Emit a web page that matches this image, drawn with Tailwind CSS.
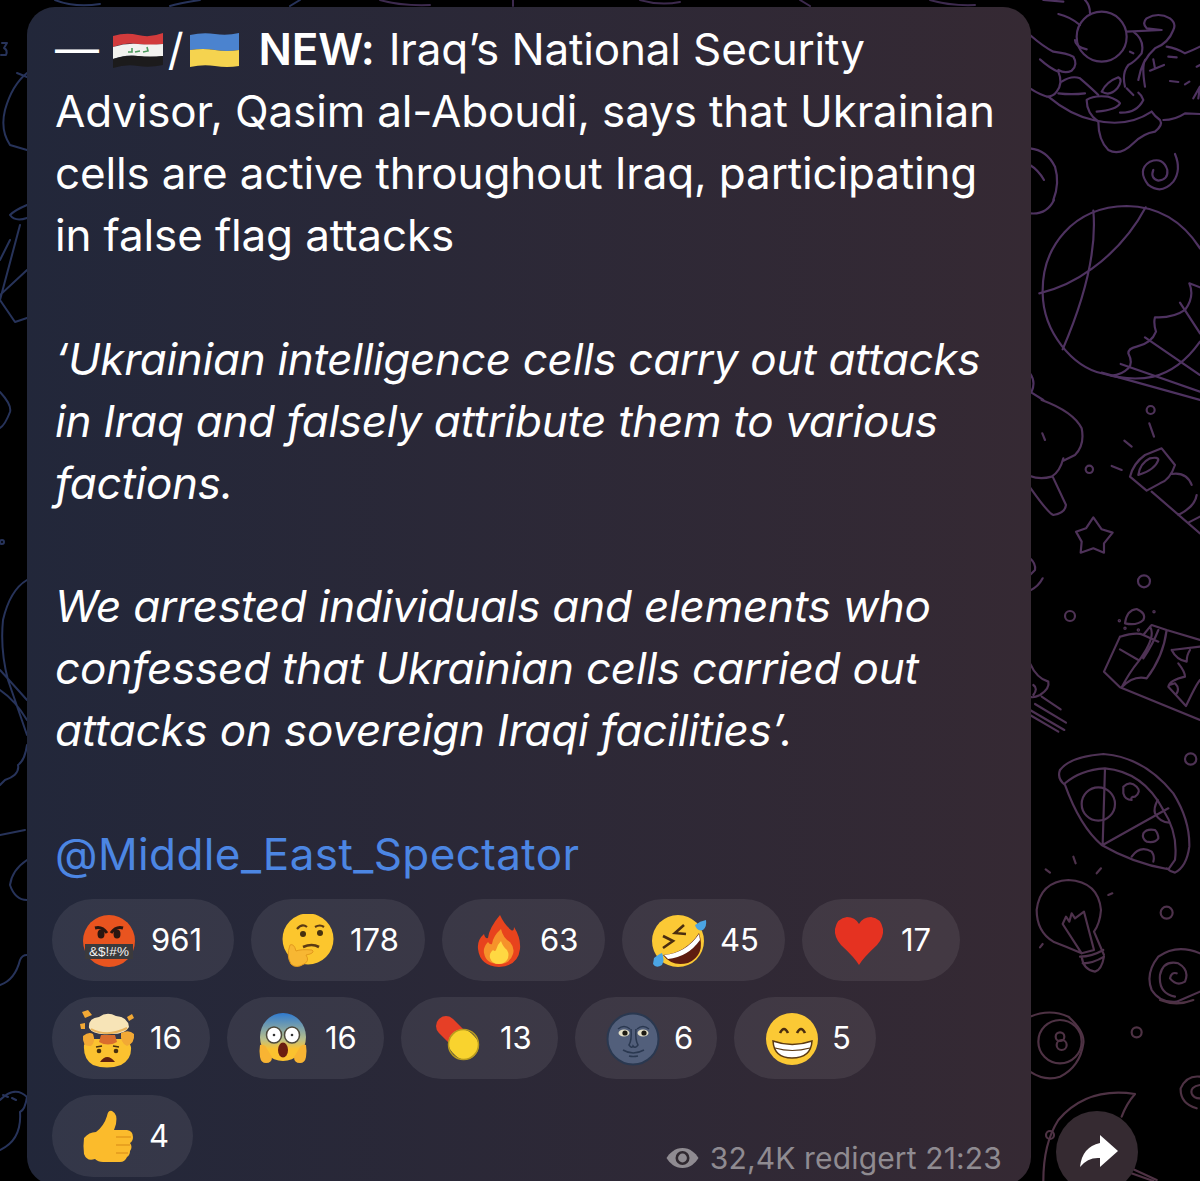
<!DOCTYPE html>
<html lang="en">
<head>
<meta charset="utf-8">
<script src="https://cdn.jsdelivr.net/npm/@tailwindcss/browser@4"></script>
<title>Post</title>
</head>
<body class="bg-black">
<div class="relative w-[1200px] h-[1181px] overflow-hidden bg-black pt-[7px] pl-[27px] font-['Inter','Liberation_Sans',sans-serif]">

  <!-- wallpaper doodles -->
  <svg class="absolute left-0 top-0" width="1200" height="1181" viewBox="0 0 1200 1181" fill="none" stroke-linecap="round" stroke-linejoin="round">
    <g stroke="#27335a" stroke-width="2">
      <path d="M2 43L7 43L4 48Q8 50 6 55L1 55"/>
      <path d="M27 73Q12 85 5 110Q0 130 10 145L27 150M17 73L27 77"/>
      <path d="M27 205Q15 210 10 215Q15 222 27 218M0 300L20 225M0 295L27 270M0 300L15 322L27 318M0 260L10 240"/>
      <path d="M0 392Q12 405 10 412Q5 425 0 428"/>
      <circle cx="2" cy="542" r="2"/>
      <path d="M27 580Q10 590 3 620Q0 650 8 680L27 735M0 670L27 700M0 690Q15 700 27 720"/>
      <path d="M27 745Q25 760 18 765Q20 775 5 780L0 785M0 835L25 830"/>
      <path d="M27 860Q12 870 10 885Q15 900 27 900"/>
      <path d="M0 985Q15 980 20 960Q22 955 27 955"/>
      <path d="M0 1100Q15 1085 27 1097Q25 1110 20 1112Q22 1140 0 1150M3 1095L8 1097M12 1098L16 1100"/>
      <path d="M55 0Q75 8 100 4M170 6Q180 3 200 0M300 0L290 6"/>
    </g>
    <g stroke="#3d2a4e" stroke-width="2">
      <path d="M380 0Q400 6 430 5M513 0L513 6M640 0Q660 6 680 2M800 0L810 6M930 0Q950 6 975 5"/>
    </g>
    <g transform="translate(1030 0) scale(.3333)" stroke="#4e3260" stroke-width="6.500">
      <circle cx="215" cy="110" r="75"/>
      <path d="M85 42Q120 50 150 75M165 0Q180 15 180 40M40 0L100 5M135 120Q135 140 170 148"/>
      <path d="M0 105Q40 140 70 155Q110 160 130 170Q145 195 125 212Q105 222 85 210M30 178Q60 205 85 215Q100 250 80 275Q70 290 50 290M0 265Q30 285 60 292M55 290Q120 345 190 360Q290 385 365 335"/>
      <path d="M85 280Q125 285 165 280M95 245Q125 225 150 235Q185 265 205 285"/>
      <path d="M215 275Q230 245 265 232Q280 240 262 265Q240 290 215 275M170 300Q190 285 235 290Q265 300 270 310Q260 330 200 335M170 300Q170 340 205 365"/>
      <path d="M270 338Q320 340 340 300Q335 285 325 278M290 265L310 285"/>
      <path d="M205 365Q205 420 235 450Q270 470 310 430Q340 400 375 395Q400 375 390 360Q375 350 365 335"/>
      <path d="M400 360Q435 360 465 340L510 342M325 240Q335 180 375 145Q415 130 430 90Q440 70 420 55Q385 35 350 55Q335 70 350 85L395 90M290 95L395 90M310 95Q345 120 335 160Q315 185 295 195Q275 220 285 260M300 155L310 160M410 140Q440 145 465 160Q490 150 510 140M345 260Q335 200 345 180"/>
      <path d="M415 170L440 172M420 243L445 246M465 253L478 245M370 178L375 205M360 212L402 195M490 295L510 260L505 295M500 200L510 195"/>
      <path d="M435 462Q455 510 430 545Q395 585 355 555Q320 510 360 485Q400 470 412 510Q415 540 385 542Q360 535 370 510"/>
      <path d="M0 445Q50 450 75 500Q90 550 70 600M0 495Q25 510 42 540"/>
    </g>
    <g transform="translate(1030 200) scale(.3333)" stroke="#4e3260" stroke-width="6.500">
      <path d="M0 40Q50 45 72 0"/>
      <path d="M510 145Q430 20 290 18C130 20 35 140 38 280C40 400 130 500 215 520Q300 545 370 530Q450 510 510 425"/>
      <path d="M190 32Q205 200 98 448M347 22Q290 130 185 207Q110 262 28 280"/>
      <path d="M510 262L478 250Q495 290 465 330Q430 355 375 352Q370 370 378 395Q365 430 320 440Q295 445 295 460Q310 490 295 505Q275 525 245 527"/>
      <path d="M450 308L510 400M345 412L510 525M272 492L510 575M215 518L510 600M0 520Q18 545 5 575L0 580M0 575L40 600"/>
    </g>
    <g transform="translate(1030 400) scale(.3333)" stroke="#4e3259" stroke-width="6.500">
      <path d="M35 0Q130 35 155 85Q165 135 135 165L100 182M100 175Q90 215 65 230Q30 240 0 228M37 100L45 120M68 230L108 315Q105 340 70 345Q55 340 0 262"/>
      <circle cx="178" cy="208" r="11"/>
      <path d="M245 198L275 210M283 122L305 140M358 70L372 110"/>
      <circle cx="362" cy="30" r="12"/>
      <path d="M300 230Q310 190 345 165L395 145L435 195Q420 240 390 250L350 272ZM325 225Q330 190 360 175Q385 170 385 180Q375 210 325 225M365 275L510 400M425 222Q470 215 485 255M500 285Q495 320 445 345M510 350L475 368"/>
      <path d="M190 352L215 388L248 398L222 430L222 458L190 445L152 458L155 425L138 395L168 385Z"/>
      <circle cx="342" cy="544" r="18"/>
      <path d="M0 475Q18 490 15 510L0 525M38 535Q25 560 0 572"/>
    </g>
    <g transform="translate(1030 600) scale(.3333)" stroke="#4e3254" stroke-width="6.500">
      <circle cx="120" cy="48" r="15"/>
      <path d="M285 70Q290 30 320 27Q350 40 340 60Q320 78 285 70"/>
      <circle cx="268" cy="62" r="2"/><circle cx="285" cy="85" r="2"/><circle cx="372" cy="35" r="2"/><circle cx="325" cy="90" r="2"/>
      <path d="M270 110L222 215L270 262M270 110Q320 95 340 105Q360 80 365 75L410 90L510 120M270 148L325 180M340 105L385 125M360 80Q380 110 325 185Q300 215 275 262Q310 225 350 235Q400 170 410 90M270 262L510 360M385 90Q370 130 340 175"/>
      <path d="M425 150L510 140M425 150Q440 180 470 185Q470 165 480 150M445 190Q465 215 465 230Q420 240 415 260L468 318Q500 250 510 240M418 255L435 250Q450 265 440 280"/>
      <path d="M0 190Q20 235 55 245Q60 265 30 285Q10 295 0 290M10 255Q25 265 10 285M35 290L92 328M15 312L108 368M0 330L103 390M85 395L0 345"/>
      <circle cx="482" cy="477" r="17"/>
      <path d="M90 510Q120 470 220 462Q340 470 430 580Q480 660 478 740Q470 800 435 818Q420 815 410 805M105 550Q150 510 225 505Q340 515 400 630Q445 700 435 780L415 808M90 510Q80 535 105 555M105 555Q150 680 215 735M215 735Q310 790 415 808M225 505L218 735M218 735L415 625"/>
      <circle cx="205" cy="612" r="50"/>
      <path d="M280 560Q300 540 320 560Q335 575 315 590Q300 590 305 600Q285 600 280 580ZM340 700Q350 685 375 690Q385 700 385 715Q375 730 350 725Q335 715 340 700M305 770Q330 735 365 755Q375 770 370 785M383 600Q370 625 375 640Q390 668 418 668"/>
    </g>
    <g transform="translate(1030 800) scale(.3333)" stroke="#4e324c" stroke-width="6.500">
      <path d="M155 460Q110 440 70 425Q20 395 20 330Q30 245 115 240Q205 245 213 330Q210 370 192 395Q205 425 222 465M98 372L108 350L118 365L125 340L135 355L162 335L192 450L155 460ZM150 470Q185 470 220 450M158 490Q190 490 222 470M155 470Q160 510 195 515Q215 510 222 470"/>
      <path d="M47 208L60 218M130 170L137 190M213 205L200 220M235 285L247 280M38 432L30 442"/>
      <circle cx="410" cy="338" r="18"/>
      <path d="M510 460Q440 430 385 470Q345 520 365 570Q390 610 440 605L510 575M435 590Q385 580 390 525Q400 480 445 490Q480 510 465 545Q440 560 420 535Q425 515 440 520"/>
    </g>
    <g transform="translate(1030 1000) scale(.3333)" stroke="#4e3244" stroke-width="6.500">
      <path d="M0 50Q60 25 115 50Q165 95 160 130Q150 200 90 230Q45 245 0 215M390 0Q440 20 490 0"/>
      <circle cx="90" cy="125" r="65"/><circle cx="90" cy="110" r="13"/><circle cx="95" cy="135" r="15"/>
      <circle cx="320" cy="97" r="15"/>
      <path d="M510 230Q470 225 452 265Q450 310 500 325M510 255Q480 260 485 280Q490 295 510 295"/>
      <path d="M315 282Q170 260 85 360Q40 430 40 543M315 282Q290 310 275 350M300 518L370 543M310 508L380 540"/>
      <circle cx="60" cy="405" r="12"/>
    </g>
  </svg>

  <!-- message bubble -->
  <div class="relative w-[1004px] h-[1178px] rounded-[28px] bg-linear-to-r from-[#22273a] to-[#352933] pt-[12px]">
    <div class="pl-[28px] text-white text-[44px] leading-[61.93px] tracking-[-0.15px] whitespace-nowrap">
      <div class="flex items-center h-[61.93px]">
        <span>—</span>
        <svg class="ml-[13px]" width="52" height="36" viewBox="0 0 52 36">
          <path d="M1 4Q14 0 26 3T51 1V12Q38 14 26 12T1 15Z" fill="#d23b3c"/>
          <path d="M1 15Q14 11 26 12T51 12V24Q38 26 26 24T1 27Z" fill="#f2f2ef"/>
          <path d="M1 27Q14 23 26 24T51 24V33Q38 36 26 34T1 36Z" fill="#1c1b1c"/>
          <path d="M16 20L20 20L20 16M23 20L28 19M31 20L36 19L35 15" stroke="#4d9a5e" stroke-width="1.6" fill="none"/>
        </svg>
        <span class="ml-[4px]">/</span>
        <svg class="ml-[5px]" width="51" height="36" viewBox="0 0 51 36">
          <path d="M1 3Q14 0 26 2T50 1V18Q38 20 26 18T1 18Z" fill="#4b83cf"/>
          <path d="M1 18Q14 16 26 18T50 18V34Q38 36 26 34T1 35Z" fill="#f5d34f"/>
        </svg>
        <span class="ml-[19px] font-semibold">NEW:</span><span class="ml-[14px]">Iraq’s National Security</span>
      </div>
      <div>Advisor, Qasim al-Aboudi, says that Ukrainian</div>
      <div>cells are active throughout Iraq, participating</div>
      <div>in false flag attacks</div>
      <div class="h-[61.93px]"></div>
      <div class="italic tracking-[-0.3px]">‘Ukrainian intelligence cells carry out attacks</div>
      <div class="italic tracking-[-0.3px]">in Iraq and falsely attribute them to various</div>
      <div class="italic tracking-[-0.3px]">factions.</div>
      <div class="h-[61.93px]"></div>
      <div class="italic tracking-[-0.2px]">We arrested individuals and elements who</div>
      <div class="italic tracking-[-0.2px]">confessed that Ukrainian cells carried out</div>
      <div class="italic tracking-[-0.2px]">attacks on sovereign Iraqi facilities’.</div>
      <div class="h-[61.93px]"></div>
      <div class="text-[#4c86e3] tracking-[0.4px]">@Middle_East_Spectator</div>
    </div>

    <div class="mt-[13px] pl-[25px] flex flex-col gap-[16px] text-white text-[31px]">
      <div class="flex gap-[17px]">
        <div class="w-[182px] h-[82px] rounded-full bg-white/[0.08] flex items-center pt-[1px] pl-[30px] gap-[15px]">
          <svg width="54" height="54" viewBox="0 0 54 54">
            <circle cx="27" cy="27" r="26" fill="#e9541f"/>
            <path d="M13 14Q20 12 25 19M41 14Q34 12 29 19" stroke="#2a1610" stroke-width="3" fill="none"/>
            <ellipse cx="19" cy="20" rx="3.5" ry="4.5" fill="#2a1610"/><ellipse cx="35" cy="20" rx="3.5" ry="4.5" fill="#2a1610"/>
            <rect x="3" y="30" width="48" height="15" fill="#3b3a3c"/>
            <text x="27" y="42" text-anchor="middle" fill="#f3f3f3" font-size="13.5" font-family="Liberation Sans">&amp;$!#%</text>
          </svg>
          <span>961</span>
        </div>
        <div class="w-[174px] h-[82px] rounded-full bg-white/[0.08] flex items-center pt-[1px] pl-[31px] gap-[15px]">
          <svg width="53" height="54" viewBox="0 0 53 54">
            <circle cx="26" cy="25" r="25.5" fill="#fcc62d"/>
            <path d="M15 15Q20 9 25 13M33 13Q38 10 42 13" stroke="#5b3a14" stroke-width="2.2" fill="none"/>
            <circle cx="21" cy="20" r="3" fill="#46300f"/><circle cx="38" cy="19" r="3" fill="#46300f"/>
            <path d="M21 33Q30 29 37 33" stroke="#5b3a14" stroke-width="2.6" fill="none"/>
            <path d="M8 31Q12 29 14 37Q19 35 30 36Q33 38 28 40L24 41Q28 47 22 50Q14 55 9 50Q4 42 8 31Z" fill="#f7b733" stroke="#e39a1d" stroke-width="1"/>
          </svg>
          <span>178</span>
        </div>
        <div class="w-[163px] h-[82px] rounded-full bg-white/[0.08] flex items-center pt-[1px] pl-[35px] gap-[19px]">
          <svg width="44" height="54" viewBox="0 0 44 54">
            <path d="M23 1Q27 10 34 16Q37 18 37 13Q44 24 43 35Q41 52 22 53Q3 52 1 35Q0 26 7 20Q8 25 11 24Q12 14 23 1Z" fill="#e8431d"/>
            <path d="M24 15Q26 24 33 28Q38 34 36 40Q33 50 22 50Q9 50 7 39Q6 33 11 28Q13 31 15 30Q16 22 24 15Z" fill="#f6922a"/>
            <path d="M24 27Q26 33 30 36Q33 41 30 46Q27 50 22 50Q15 50 13 44Q12 39 16 36Q18 38 19 36Q20 31 24 27Z" fill="#ffd842"/>
          </svg>
          <span>63</span>
        </div>
        <div class="w-[163px] h-[82px] rounded-full bg-white/[0.08] flex items-center pt-[1px] pl-[28px] gap-[13px]">
          <svg width="57" height="56" viewBox="0 0 57 56">
            <circle cx="28" cy="28" r="26" fill="#fbc935"/>
            <path d="M34 12L25 20L36 21M13 23L23 28L13 35" stroke="#4a2d10" stroke-width="2.6" fill="none"/>
            <path d="M13 42Q36 40 49 20Q56 42 38 50Q22 54 13 42Z" fill="#5e1c10"/>
            <path d="M14 42Q36 40 49 21L50 27Q38 44 18 46Z" fill="#ffffff"/>
            <path d="M45 12Q50 8 56 7Q57 14 53 17Q47 19 45 12Z" fill="#4ba5e4"/>
            <path d="M4 45Q9 41 12 40Q15 47 12 52Q6 56 3 51Z" fill="#4ba5e4"/>
          </svg>
          <span>45</span>
        </div>
        <div class="w-[158px] h-[82px] rounded-full bg-white/[0.08] flex items-center pt-[1px] pl-[32px] gap-[17px]">
          <svg width="50" height="50" viewBox="0 0 50 50">
            <path d="M25 49Q21 42 7 29Q0 21 1 13Q3 2 13 1Q21 1 25 8Q29 1 37 1Q47 2 49 13Q50 21 43 29Q29 42 25 49Z" fill="#e53221"/>
          </svg>
          <span>17</span>
        </div>
      </div>

      <div class="flex gap-[17px]">
        <div class="w-[158px] h-[82px] rounded-full bg-white/[0.08] flex items-center pt-[1px] pl-[27px] gap-[14px]">
          <svg width="57" height="59" viewBox="0 0 57 59">
            <path d="M5 36Q8 30 14 30H44Q50 31 52 38Q53 50 42 56Q28 61 14 56Q4 50 5 36Z" fill="#fbc22f"/>
            <path d="M4 27Q10 22 14 25Q17 33 12 37Q3 38 4 27ZM42 24Q50 20 55 25Q56 34 48 37Q41 34 42 24Z" fill="#f2a935"/>
            <path d="M22 26H36L38 33Q29 38 20 33Z" fill="#d96d2d"/>
            <path d="M10 19Q9 9 20 8Q28 2 37 7Q49 8 50 18Q46 26 29 25Q14 26 10 19Z" fill="#f7e4b7"/>
            <path d="M12 20Q28 29 48 19" stroke="#e8b35d" stroke-width="2" fill="none"/>
            <path d="M3 3L9 1L13 6L6 9ZM48 8L53 5L55 9L50 12ZM1 15L6 14L6 20L2 20Z" fill="#f2a935"/>
            <circle cx="20" cy="42" r="2.3" fill="#46300f"/><circle cx="37" cy="42" r="2.3" fill="#46300f"/>
            <path d="M17 38L23 37M34 37L40 38" stroke="#46300f" stroke-width="1.7"/>
            <path d="M21 53Q28 43 36 53Z" fill="#5e1f10"/>
          </svg>
          <span>16</span>
        </div>
        <div class="w-[157px] h-[82px] rounded-full bg-white/[0.08] flex items-center pt-[1px] pl-[32px] gap-[18px]">
          <svg width="48" height="51" viewBox="0 0 48 51">
            <defs><linearGradient id="sc" x1="0" y1="0" x2="0" y2="1"><stop offset="0" stop-color="#2f7ad0"/><stop offset=".55" stop-color="#b9c08b"/><stop offset=".75" stop-color="#fbc22f"/></linearGradient></defs>
            <ellipse cx="24" cy="24" rx="23" ry="24" fill="url(#sc)"/>
            <ellipse cx="15" cy="22" rx="7.5" ry="8" fill="#fff" stroke="#4e4a3c" stroke-width="1.5"/>
            <ellipse cx="33" cy="22" rx="7.5" ry="8" fill="#fff" stroke="#4e4a3c" stroke-width="1.5"/>
            <circle cx="15" cy="22" r="1.3" fill="#333"/><circle cx="33" cy="22" r="1.3" fill="#333"/>
            <ellipse cx="24" cy="37" rx="5" ry="7.5" fill="#6a1e10"/>
            <path d="M1 32Q6 31 8 36L13 44Q13 50 7 50Q2 50 1 44Q0 38 1 32ZM47 32Q42 31 40 36L35 44Q35 50 41 50Q46 50 47 44Q48 38 47 32Z" fill="#f8b433"/>
          </svg>
          <span>16</span>
        </div>
        <div class="w-[157px] h-[82px] rounded-full bg-white/[0.08] flex items-center pt-[1px] pl-[35px] gap-[18px]">
          <svg width="46" height="46" viewBox="0 0 46 46">
            <path d="M10 10L24 24" stroke="#e63f26" stroke-width="20" stroke-linecap="round"/>
            <path d="M26 27L29 30" stroke="#f9d32e" stroke-width="27" stroke-linecap="round"/>
            <circle cx="27.500" cy="28.500" r="15" fill="none" stroke="#b89a1e" stroke-width="1.500"/>
          </svg>
          <span>13</span>
        </div>
        <div class="w-[142px] h-[82px] rounded-full bg-white/[0.08] flex items-center pt-[1px] pl-[31px] gap-[14px]">
          <svg width="54" height="54" viewBox="0 0 54 54">
            <circle cx="27" cy="27" r="25.5" fill="#525f7b" stroke="#2a3850" stroke-width="2"/>
            <path d="M12 17Q18 12 24 17M31 17Q37 12 43 17" stroke="#2a3850" stroke-width="1.5" fill="none"/>
            <ellipse cx="18" cy="21" rx="5.5" ry="3.5" fill="#e4e0c8"/><ellipse cx="37" cy="21" rx="5.5" ry="3.5" fill="#e4e0c8"/>
            <circle cx="19" cy="21" r="2.6" fill="#1d1a12"/><circle cx="38" cy="21" r="2.6" fill="#1d1a12"/>
            <path d="M25 17Q26 28 23 33Q26 37 27 34Q29 37 32 33Q29 28 30 17" stroke="#2a3850" stroke-width="1.5" fill="none"/>
            <path d="M17 38Q27 44 38 38M23 44Q27 45 32 44" stroke="#2a3850" stroke-width="1.5" fill="none"/>
          </svg>
          <span>6</span>
        </div>
        <div class="w-[142px] h-[82px] rounded-full bg-white/[0.08] flex items-center pt-[1px] pl-[31px] gap-[13px]">
          <svg width="54" height="54" viewBox="0 0 54 54">
            <circle cx="27" cy="27" r="26" fill="#fbc935"/>
            <path d="M15 21Q19 13 23 21M32 21Q36 13 40 21" stroke="#4a2d10" stroke-width="2.6" fill="none"/>
            <path d="M8 29Q27 36 47 29Q46 46 27 46Q9 46 8 29Z" fill="#fff" stroke="#5b3a14" stroke-width="1.5"/>
            <path d="M10 36Q27 41 45 36" stroke="#5b3a14" stroke-width="1.2" fill="none"/>
          </svg>
          <span>5</span>
        </div>
      </div>

      <div class="flex items-center justify-between pr-[29px]">
        <div class="w-[141px] h-[82px] rounded-full bg-white/[0.08] flex items-center pt-[1px] pl-[31px] gap-[15px]">
          <svg width="51" height="53" viewBox="0 0 51 53">
            <path d="M1 28Q6 22 13 22Q21 16 24 6Q25 0 29 1Q35 4 33 14L31 20H44Q50 21 50 27Q50 31 47 33Q50 37 47 41Q47 45 44 47Q42 52 37 52H20Q15 52 12 49Q4 52 1 44Q0 35 1 28Z" fill="#fbbb2c"/>
            <path d="M33 27H48M33 35H47M33 43H45" stroke="#e39a1d" stroke-width="1.5" fill="none"/>
          </svg>
          <span>4</span>
        </div>
        <div class="flex items-center gap-[11px] mt-[44px] text-[#8f8b91] text-[30px] leading-none tracking-[0.15px]">
          <svg width="33" height="22" viewBox="0 0 33 22">
            <path d="M16.500 1C24 1 29.500 6 32.500 11C29.500 16 24 21 16.500 21C9 21 3.500 16 .5 11C3.500 6 9 1 16.500 1Z" fill="#8f8b91"/>
            <circle cx="16.500" cy="11" r="7" fill="#2f282f"/>
            <circle cx="16.500" cy="11" r="4.400" fill="#8f8b91"/>
          </svg>
          <span>32,4K redigert 21:23</span>
        </div>
      </div>
    </div>
  </div>

  <!-- forward button -->
  <div class="absolute left-[1056px] top-[1111px] w-[82px] h-[82px] rounded-full bg-[#352a31] flex items-center justify-center">
    <svg width="38" height="32" viewBox="0 0 38 32" class="mb-[2px] ml-[3px]">
      <path d="M20 0L38 16L20 32L20 23Q8 22 0 32Q2 12 20 8Z" fill="#fff"/>
    </svg>
  </div>
</div>
</body>
</html>
